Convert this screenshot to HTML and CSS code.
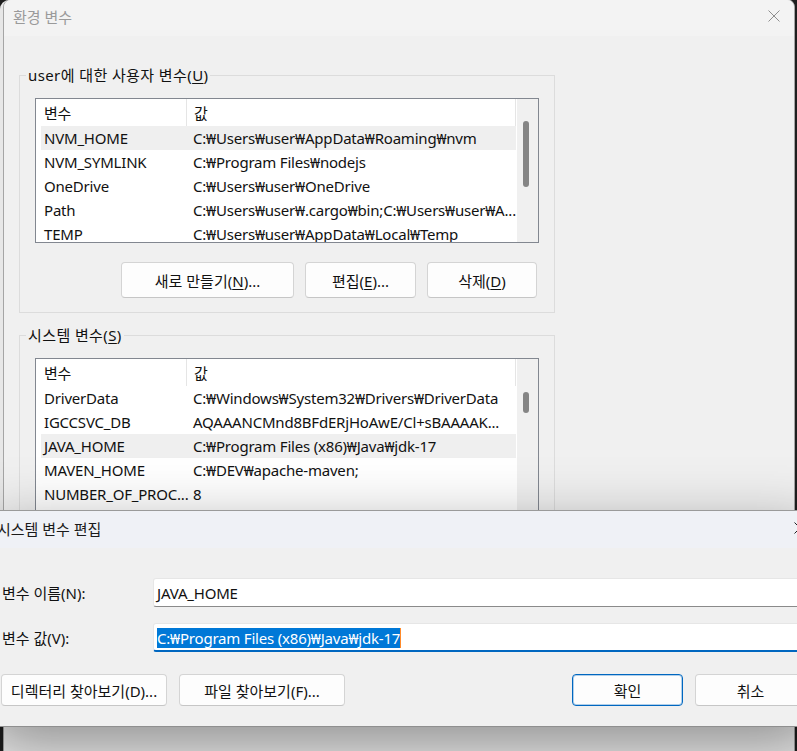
FILE: index.html
```html
<!DOCTYPE html>
<html lang="ko">
<head>
<meta charset="UTF-8">
<title>환경 변수</title>
<link rel="stylesheet" href="styles.css">
</head>
<body>

<div class="behind"></div>

<!-- back window -->
<div class="win env">
  <div class="titlebar">
    <span class="title">환경 변수</span>
    <svg class="close" width="12" height="12" viewBox="0 0 12 12"><path d="M0.5 0.5L11.5 11.5M11.5 0.5L0.5 11.5" stroke="#8e8e8e" stroke-width="1"/></svg>
  </div>
  <div class="env-body">

    <div class="group">
      <span class="group-label">user에 대한 사용자 변수(<u>U</u>)</span>
      <div class="list list-user">
        <div class="rows">
          <div class="row head"><span>변수</span><span>값</span></div>
          <div class="row sel"><span>NVM_HOME</span><span>C:₩Users₩user₩AppData₩Roaming₩nvm</span></div>
          <div class="row"><span>NVM_SYMLINK</span><span>C:₩Program Files₩nodejs</span></div>
          <div class="row"><span>OneDrive</span><span>C:₩Users₩user₩OneDrive</span></div>
          <div class="row"><span>Path</span><span>C:₩Users₩user₩.cargo₩bin;C:₩Users₩user₩A...</span></div>
          <div class="row"><span>TEMP</span><span>C:₩Users₩user₩AppData₩Local₩Temp</span></div>
        </div>
        <div class="track"><div class="thumb thumb-user"></div></div>
      </div>
      <div class="actions">
        <button class="btn btn-new">새로 만들기(<u>N</u>)...</button>
        <button class="btn btn-small">편집(<u>E</u>)...</button>
        <button class="btn btn-small">삭제(<u>D</u>)</button>
      </div>
    </div>

    <div class="group group-sys">
      <span class="group-label">시스템 변수(<u>S</u>)</span>
      <div class="list list-sys">
        <div class="rows">
          <div class="row head"><span>변수</span><span>값</span></div>
          <div class="row"><span>DriverData</span><span>C:₩Windows₩System32₩Drivers₩DriverData</span></div>
          <div class="row"><span>IGCCSVC_DB</span><span>AQAAANCMnd8BFdERjHoAwE/Cl+sBAAAAK...</span></div>
          <div class="row sel"><span>JAVA_HOME</span><span>C:₩Program Files (x86)₩Java₩jdk-17</span></div>
          <div class="row"><span>MAVEN_HOME</span><span>C:₩DEV₩apache-maven;</span></div>
          <div class="row"><span>NUMBER_OF_PROC...</span><span>8</span></div>
          <div class="row"><span>OS</span><span>Windows_NT</span></div>
        </div>
        <div class="track"><div class="thumb thumb-sys"></div></div>
      </div>
    </div>

  </div>
</div>

<!-- front dialog -->
<div class="win edit">
  <div class="titlebar edit-title">
    <span class="title">시스템 변수 편집</span>
    <svg class="close" width="12" height="12" viewBox="0 0 12 12"><path d="M0.5 0.5L11.5 11.5M11.5 0.5L0.5 11.5" stroke="#1f1f1f" stroke-width="1"/></svg>
  </div>
  <div class="edit-body">
    <div class="fields">
      <label class="field-label">변수 이름(N):</label>
      <div class="input">JAVA_HOME</div>
      <label class="field-label">변수 값(V):</label>
      <div class="input focus"><span class="selected">C:₩Program Files (x86)₩Java₩jdk-17</span><span class="caret"></span></div>
    </div>
    <div class="edit-actions">
      <button class="btn btn-wide btn-dir">디렉터리 찾아보기(D)...</button>
      <button class="btn btn-wide">파일 찾아보기(F)...</button>
      <button class="btn btn-ok">확인</button>
      <button class="btn btn-ok btn-cancel">취소</button>
    </div>
  </div>
</div>

</body>
</html>
```

FILE: styles.css
```css
* {
  box-sizing: border-box;
}
html, body {
  overflow: hidden;
}
body {
  margin: 0;
  width: 797px;
  height: 751px;
  position: relative;
  background: #1e1e1e;
  font-family: "Noto Sans", "Noto Sans CJK KR", sans-serif;
  font-size: 15px;
  color: #111;
}
u {
  text-underline-offset: 2px;
}

/* window peeking out on the left */
.behind {
  position: absolute;
  left: 0;
  top: 0;
  width: 30px;
  height: 726px;
  background: #e7e7e7;
  border-radius: 9px 0 0 0;
}

.win {
  position: absolute;
  background: #f0f0f0;
}
.titlebar {
  display: flex;
  align-items: center;
}
.close {
  margin-left: auto;
  flex: none;
}

/* ---- 환경 변수 ---- */
.env {
  left: 3px;
  top: -1px;
  width: 792px;
  height: 780px;
  border: 1px solid #a5a5a5;
  border-radius: 8px 8px 0 0;
  overflow: hidden;
}
.env .titlebar {
  height: 36px;
  padding: 0 14px 4px 9px;
  background: #f3f3f3;
  color: #9a9a9a;
}
.env-body {
  padding: 39px 0 0 15px;
}
.group {
  position: relative;
  width: 536px;
  border: 1px solid #dcdcdc;
  padding: 22px 15px 14px;
}
.group-sys {
  margin-top: 22px;
  height: 300px;
}
.group-label {
  position: absolute;
  left: 6px;
  top: -11px;
  padding: 0 2px;
  line-height: 20px;
  background: #f0f0f0;
  white-space: nowrap;
  letter-spacing: 0.4px;
}

.list {
  display: flex;
  width: 504px;
  border: 1px solid #828790;
  background: #fff;
  overflow: hidden;
}
.list-user {
  height: 145px;
}
.list-sys {
  height: 170px;
}
.rows {
  width: 481px;
  padding: 0 1px 0 5px;
}
.row {
  display: grid;
  grid-template-columns: 146px 1fr;
  height: 24px;
  align-items: center;
  white-space: nowrap;
  letter-spacing: -0.2px;
}
.row span {
  padding-left: 6px;
}
.row span:first-child {
  padding-left: 3px;
}
.row.head {
  height: 27px;
  align-items: stretch;
}
.row.head span {
  display: flex;
  align-items: center;
  border-right: 1px solid #e5e5e5;
}
.row.head span + span {
  padding-left: 7px;
}
.row.sel {
  background: #efefef;
}
.track {
  position: relative;
  width: 21px;
  background: #f0f0f0;
}
.thumb {
  position: absolute;
  left: 6px;
  width: 6px;
  background: #858585;
  border-radius: 3px;
}
.thumb-user {
  top: 22px;
  height: 66px;
}
.thumb-sys {
  top: 33px;
  height: 21px;
}

.actions {
  display: flex;
  justify-content: flex-end;
  gap: 11px;
  margin: 19px 2px 0 0;
}
.btn {
  height: 36px;
  padding: 0;
  font: inherit;
  color: #111;
  background: #fdfdfd;
  border: 1px solid #d4d4d4;
  border-bottom-color: #c6c6c6;
  border-radius: 4px;
}
.btn-new {
  width: 173px;
}
.btn-small {
  width: 111px;
}
.btn-small + .btn-small {
  width: 110px;
}

/* ---- 시스템 변수 편집 ---- */
.edit {
  left: -14px;
  top: 510px;
  width: 836px;
  border-top: 1px solid #9a9a9a;
  border-bottom: 1px solid #8f8f8f;
  box-shadow: 0 20px 60px rgba(0, 0, 0, 0.41);
}
.edit-title {
  height: 37px;
  padding: 0 16px 3px 11px;
  background: #eff1f6;
  color: #1a1a1a;
}
.edit-body {
  padding: 30px 16px 20px;
}
.fields {
  display: grid;
  grid-template-columns: 151px 1fr;
  row-gap: 16px;
  align-items: center;
}
.input {
  display: flex;
  align-items: center;
  height: 29px;
  padding-left: 3px;
  background: #fff;
  border: 1px solid #e6e6e6;
  border-bottom-color: #8a8a8a;
  border-radius: 3px;
  white-space: nowrap;
  letter-spacing: -0.2px;
}
.input.focus {
  border-bottom: 2px solid #0067c0;
  padding-top: 1px;
}
.selected {
  line-height: 20px;
  background: #0078d7;
  color: #fff;
}
.caret {
  width: 1px;
  height: 20px;
  background: #ff8a2a;
}

.edit-actions {
  display: flex;
  gap: 12px;
  margin-top: 22px;
}
.edit-actions .btn {
  height: 32px;
}
.btn-wide {
  width: 166px;
}
.btn-dir {
  margin-left: -1px;
}
.btn-ok {
  width: 111px;
  margin-left: auto;
  border: 1px solid #0067c0;
  box-shadow: inset 0 0 0 1px rgba(0, 103, 192, 0.3);
}
.btn-cancel {
  margin-left: 0;
  border: 1px solid #d4d4d4;
  border-bottom-color: #c6c6c6;
  box-shadow: none;
}
```
